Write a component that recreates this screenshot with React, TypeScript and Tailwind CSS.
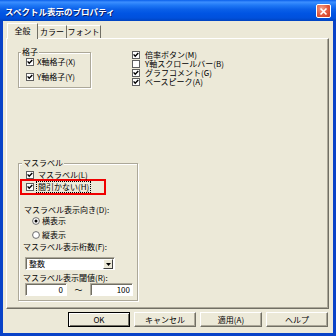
import React from "react";

function Check({ checked }: { checked: boolean }) {
  return (
    <svg width="8" height="8" viewBox="0 0 8 8" className="shrink-0 block">
      <rect x="0.5" y="0.5" width="7" height="7" fill="#fff" stroke="#5f5f5f" />
      {checked && (
        <path d="M1.6 3.4 L3.2 5.2 L6.3 1.9" fill="none" stroke="#000" strokeWidth="1.4" />
      )}
    </svg>
  );
}

function Radio({ checked }: { checked: boolean }) {
  return (
    <svg width="8" height="8" viewBox="0 0 8 8" className="shrink-0 block">
      <circle cx="4" cy="4" r="3.4" fill="#fff" stroke="#6b6b6b" />
      {checked && <circle cx="4" cy="4" r="1.5" fill="#000" />}
    </svg>
  );
}

function Btn({ label, def }: { label: string; def?: boolean }) {
  return (
    <div
      className={
        "w-[62px] h-[15px] flex items-center justify-center text-[8px] leading-[8px] text-black bg-[#ECE9D8] " +
        (def
          ? "border border-black shadow-[inset_1px_1px_0_#fff,inset_-1px_-1px_0_#716F64]"
          : "border border-t-white border-l-white border-r-[#716F64] border-b-[#716F64] shadow-[inset_-1px_-1px_0_#ACA899]")
      }
    >
      {label}
    </div>
  );
}

export default function App() {
  return (
    <div className="w-[336px] h-[336px] flex flex-col bg-[#0842C8] font-['Noto_Sans_CJK_JP','Noto_Sans',sans-serif] text-black overflow-hidden">
      {/* title bar */}
      <div className="h-[21px] flex items-center justify-between pl-[5px] pr-[5px] bg-[linear-gradient(to_bottom,#0A5FEA_0%,#3C8FFF_10%,#1F78F5_25%,#0A5FE8_45%,#0054E3_65%,#0050DC_85%,#0043C0_100%)]">
        <span className="text-white text-[8.5px] leading-[10px] font-bold mt-[1px] [text-shadow:1px_1px_0_#0A1E6A]">
          スペクトル表示のプロパティ
        </span>
        <div className="w-[15px] h-[14px] mt-[1px] rounded-[2px] border border-white bg-[radial-gradient(circle_at_35%_30%,#F4A08A_0%,#E2573C_55%,#C7391E_100%)] flex items-center justify-center">
          <svg width="9" height="9" viewBox="0 0 9 9">
            <path d="M1.5 1.5 L7.5 7.5 M7.5 1.5 L1.5 7.5" stroke="#fff" strokeWidth="1.6" />
          </svg>
        </div>
      </div>

      {/* body */}
      <div className="flex-1 mx-[3px] mb-[3px] bg-[#ECE9D8] flex flex-col text-[8px] leading-[10px]">
        {/* tabs */}
        <div className="mt-[2px] ml-[4px] h-[15px] flex items-end">
          <div className="relative z-10 mb-[-1px] w-[31px] h-[16px] bg-[#ECE9D8] border-t border-l border-t-white border-l-white border-r border-r-[#716F64] flex items-center justify-center pb-[1px]">
            全般
          </div>
          <div className="w-[29px] h-[13px] border-t border-t-white border-r border-r-[#716F64] flex items-center justify-center">
            カラー
          </div>
          <div className="w-[34px] h-[13px] border-t border-t-white border-r border-r-[#716F64] flex items-center justify-center">
            フォント
          </div>
        </div>

        {/* panel */}
        <div className="ml-[3px] w-[323px] h-[271px] border border-t-white border-l-white border-r-[#716F64] border-b-[#716F64] shadow-[inset_-1px_-1px_0_#ACA899] flex flex-col">
          {/* top row */}
          <div className="flex items-start">
            <fieldset className="ml-[11px] mt-[8px] w-[73px] border border-[#ACA899] shadow-[1px_1px_0_#fff,inset_1px_1px_0_#fff] pb-[6px]">
              <legend className="ml-[2px] px-[1px] h-[10px] leading-[10px] bg-[#ECE9D8]">格子</legend>
              <div className="ml-[7px] h-[9px] flex items-center gap-[3px]">
                <Check checked />
                <span>X軸格子(X)</span>
              </div>
              <div className="ml-[7px] mt-[6px] h-[9px] flex items-center gap-[3px]">
                <Check checked />
                <span>Y軸格子(Y)</span>
              </div>
            </fieldset>
            <div className="ml-[41px] mt-[11px] flex flex-col">
              {[
                ["倍率ボタン(M)", true],
                ["Y軸スクロールバー(B)", false],
                ["グラフコメント(G)", true],
                ["ベースピーク(A)", true],
              ].map(([t, c]) => (
                <div key={t as string} className="h-[9px] flex items-center gap-[5px] overflow-visible">
                  <Check checked={c as boolean} />
                  <span className="block h-[9px] leading-[9px]">{t as string}</span>
                </div>
              ))}
            </div>
          </div>

          {/* mass label group */}
          <fieldset className="ml-[11px] mt-[70px] w-[120px] border border-[#ACA899] shadow-[1px_1px_0_#fff,inset_1px_1px_0_#fff] pb-[4px]">
            <legend className="ml-[3px] px-[1px] h-[10px] leading-[10px] bg-[#ECE9D8]">マスラベル</legend>
            <div className="mt-[2px] ml-[7px] h-[9px] flex items-center gap-[4px]">
              <Check checked />
              <span>マスラベル(L)</span>
            </div>
            <div className="ml-[1px] w-[86px] h-[16px] border-2 border-[#F00000] flex items-center">
              <div className="ml-[4px] flex items-center gap-[3px]">
                <Check checked />
                <span className="outline-1 outline-dotted outline-black px-[1px] leading-[10px]">間引かない(H)</span>
              </div>
            </div>
            <div className="mt-[10px] ml-[5px] h-[10px] flex items-center">マスラベル表示向き(D):</div>
            <div className="ml-[13px] h-[12px] flex items-center gap-[2px]">
              <Radio checked />
              <span>横表示</span>
            </div>
            <div className="mt-[2px] ml-[13px] h-[12px] flex items-center gap-[2px]">
              <Radio checked={false} />
              <span>縦表示</span>
            </div>
            <div className="mt-[1px] ml-[4px] h-[10px] flex items-center">マスラベル表示桁数(F):</div>
            <div className="mt-[5px] ml-[6px] w-[90px] h-[13px] bg-white border border-t-[#ACA899] border-l-[#ACA899] border-r-white border-b-white shadow-[inset_1px_1px_0_#716F64] flex items-center justify-between">
              <span className="ml-[3px]">整数</span>
              <div className="w-[10px] h-[10px] mr-[1px] mt-[1px] bg-[#ECE9D8] border border-t-white border-l-white border-r-[#404040] border-b-[#404040] flex items-center justify-center">
                <svg width="5" height="3" viewBox="0 0 5 3">
                  <path d="M0 0 H5 L2.5 3 Z" fill="#000" />
                </svg>
              </div>
            </div>
            <div className="mt-[3px] ml-[4px] h-[10px] flex items-center">マスラベル表示閾値(R):</div>
            <div className="ml-[6px] flex items-center">
              <div className="w-[42px] h-[13px] bg-white border border-t-[#ACA899] border-l-[#ACA899] border-r-white border-b-white shadow-[inset_1px_1px_0_#716F64] flex items-center justify-end pr-[3px]">
                0
              </div>
              <div className="w-[23px] text-center">～</div>
              <div className="w-[43px] h-[13px] bg-white border border-t-[#ACA899] border-l-[#ACA899] border-r-white border-b-white shadow-[inset_1px_1px_0_#716F64] flex items-center justify-end pr-[2px]">
                100
              </div>
            </div>
          </fieldset>
        </div>

        {/* buttons */}
        <div className="mt-[3px] pr-[5px] flex justify-end gap-[4px]">
          <Btn label="OK" def />
          <Btn label="キャンセル" />
          <Btn label="適用(A)" />
          <Btn label="ヘルプ" />
        </div>
      </div>
    </div>
  );
}
